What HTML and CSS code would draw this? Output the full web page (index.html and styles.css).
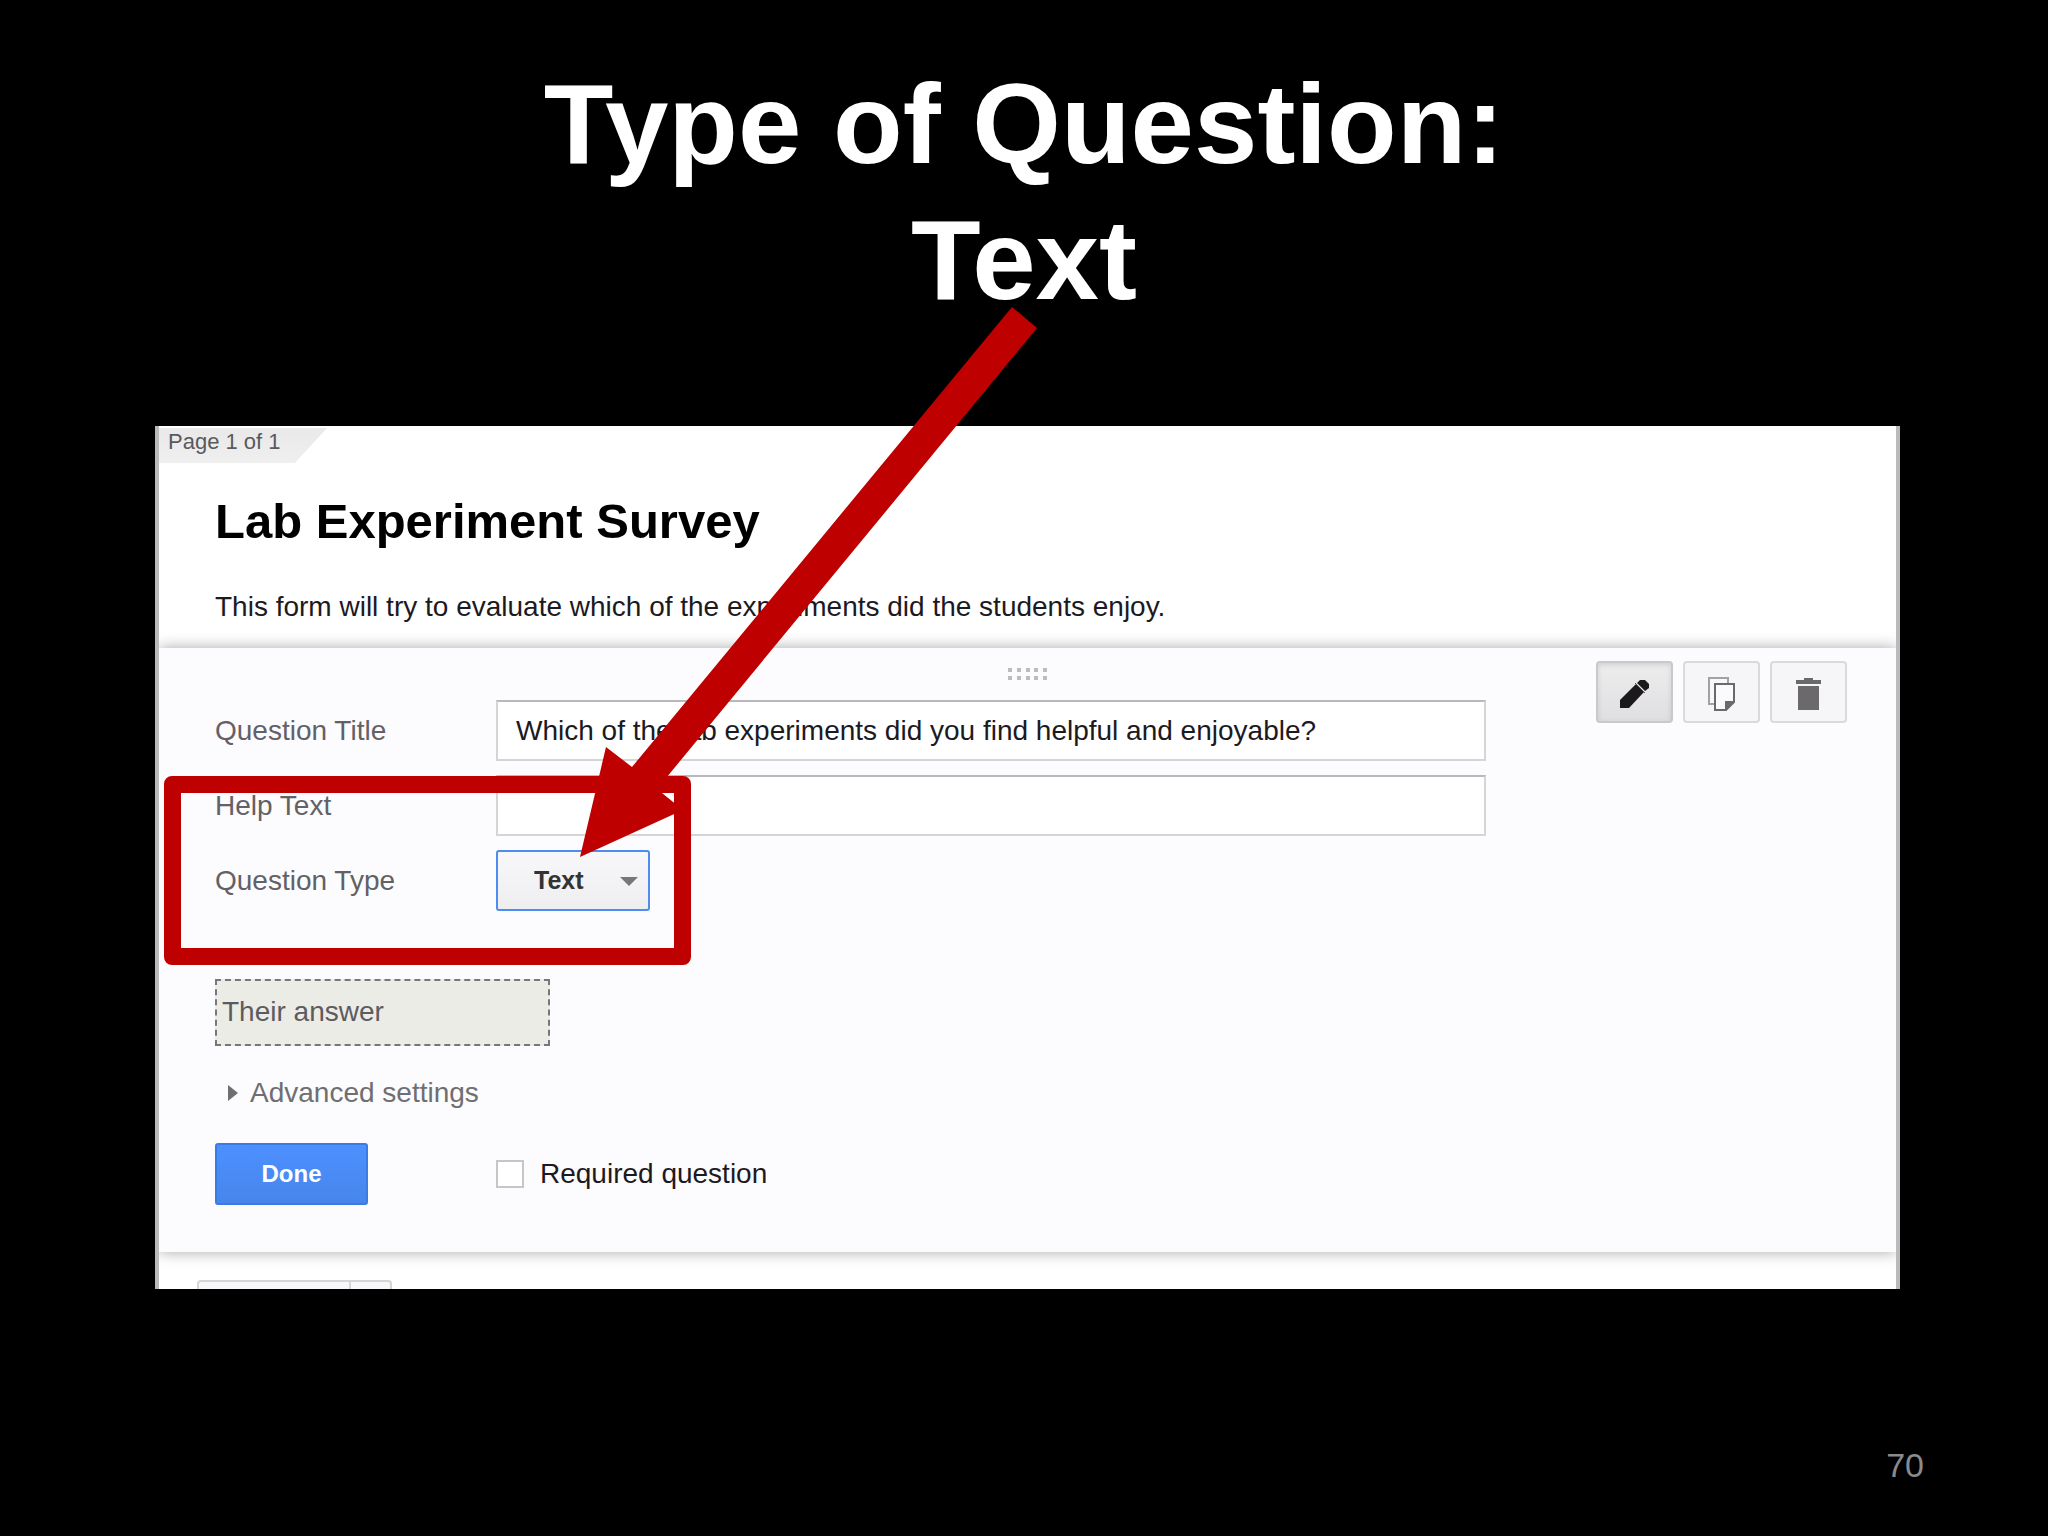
FILE: index.html
```html
<!DOCTYPE html>
<html lang="en">
<head>
    <meta charset="UTF-8">
    <meta name="viewport" content="width=device-width, initial-scale=1.0">
    <title>Type of Question: Text</title>
    <link rel="stylesheet" href="styles.css">
</head>
<body>
    <h1>Type of Question:<br>Text</h1>

    <div class="stage">
        <div class="panel">
            <div class="page-tab">Page 1 of 1</div>
            <div class="form-header">
                <h2>Lab Experiment Survey</h2>
                <p>This form will try to evaluate which of the experiments did the students enjoy.</p>
            </div>

            <div class="card">
                <svg class="drag" width="40" height="12" fill="#bdbcbe">
                    <path d="M0 0h4v4h-4zM9 0h4v4h-4zM18 0h4v4h-4zM26 0h4v4h-4zM35 0h4v4h-4zM0 8h4v4h-4zM9 8h4v4h-4zM18 8h4v4h-4zM26 8h4v4h-4zM35 8h4v4h-4z"/>
                </svg>
                <form class="question">
                    <div class="row">
                        <label for="questionTitle">Question Title</label>
                        <input type="text" id="questionTitle" value="Which of the lab experiments did you find helpful and enjoyable?">
                    </div>
                    <div class="row">
                        <label for="helpText">Help Text</label>
                        <input type="text" id="helpText">
                    </div>
                    <div class="row">
                        <label for="questionType">Question Type</label>
                        <div class="select">
                            <select id="questionType">
                                <option>Text</option>
                            </select>
                        </div>
                    </div>

                    <div class="answer">Their answer</div>
                    <a class="advanced" href="#">Advanced settings</a>

                    <div class="row">
                        <button type="button" class="done">Done</button>
                        <div class="required">
                            <input type="checkbox" id="required">
                            <label for="required">Required question</label>
                        </div>
                    </div>
                </form>

                <div class="toolbar">
                    <button type="button" class="tool active" aria-label="Edit">
                        <svg width="30" height="30" viewBox="0 0 30 30" fill="#1b191c">
                            <path d="M0 21L16 5L24 13L9 29H0zM17 4L20 1H25L29 5V9L25 12z"/>
                            <path d="M15 4L25 14" stroke="#5c5a5e" stroke-width="1"/>
                        </svg>
                    </button>
                    <button type="button" class="tool" aria-label="Duplicate">
                        <svg width="28" height="34" viewBox="0 0 28 34" fill="none">
                            <path d="M1 1H20V27H1z" fill="#f8f7f9" stroke="#a3a1a4" stroke-width="2"/>
                            <path d="M7 7H26V25L18 33H7z" fill="#fbfafc" stroke="#6b696c" stroke-width="2"/>
                            <path d="M17 33V24H27z" fill="#6b696c"/>
                        </svg>
                    </button>
                    <button type="button" class="tool" aria-label="Delete">
                        <svg width="26" height="32" viewBox="0 0 26 32" fill="#6b696c">
                            <path d="M0 2H8V0H17V2H25V6H0zM2 8H23V32H2z"/>
                        </svg>
                    </button>
                </div>
            </div>

            <div class="form-footer">
                <button type="button" class="add" aria-label="Add item"></button>
                <button type="button" class="add-more" aria-label="More items"></button>
            </div>
        </div>

        <!-- callout over the question type -->
        <div class="highlight"></div>
        <svg class="arrow" width="460" height="554" viewBox="0 0 460 554">
            <path d="M432 1L457 22L77 483L103 504L0 551L26 441L52 461z" fill="#bf0000"/>
        </svg>
    </div>

    <div class="page-number">70</div>
</body>
</html>
```

FILE: styles.css
```css
* {
    box-sizing: border-box;
}
body {
    margin: 0;
    padding: 56px 124px 0 155px;
    background: #000;
    font-family: "Liberation Sans", Arial, sans-serif;
    font-size: 28px;
    line-height: 32px;
    color: #1c1a1f;
}
h1 {
    /* keeps the title centred on the slide */
    margin: 0 0 98px -31px;
    font-size: 114px;
    line-height: 136px;
    text-align: center;
    color: #fff;
}
.stage {
    position: relative;
    margin-right: 24px;
}
.panel {
    overflow: hidden;
    padding-top: 2px;
    background: #fff;
    border-left: 4px solid #bab9bc;
    border-right: 4px solid #bab9bc;
}
.page-tab {
    width: 168px;
    height: 35px;
    padding-left: 9px;
    background: linear-gradient(#e9e9e9, #efefef);
    clip-path: polygon(0 0, 100% 0, 136px 100%, 0 100%);
    font-size: 22px;
    line-height: 28px;
    color: #5a595c;
}
.form-header {
    padding: 30px 56px 25px;
}
h2 {
    margin: 0 0 42px;
    font-size: 49px;
    line-height: 56px;
    color: #000;
}
p {
    margin: 0;
}

/* Question editor */
.card {
    position: relative;
    display: flex;
    align-items: flex-start;
    gap: 110px;
    padding: 0 49px 47px 56px;
    background: #fcfbfd;
    box-shadow: 0 0 14px rgba(0, 0, 0, 0.35);
}
.drag {
    position: absolute;
    top: 20px;
    left: 50%;
    margin-left: -20px;
}
.question {
    flex: 1;
    padding-top: 52px;
}
.row {
    display: grid;
    grid-template-columns: 281px 1fr;
    align-items: center;
    margin-bottom: 14px;
}
.row:last-child {
    margin-bottom: 0;
}
.row > label {
    color: #626166;
}
input[type="text"] {
    width: 100%;
    height: 61px;
    padding: 0 18px;
    border: 2px solid #d5d4d7;
    border-top-color: #b9b8bb;
    background: #fff;
    font: inherit;
    color: inherit;
}
.select {
    position: relative;
    width: 154px;
}
.select::after {
    content: "";
    position: absolute;
    top: 27px;
    right: 12px;
    border: 9px solid transparent;
    border-top-color: #77767a;
    border-bottom: 0;
}
select {
    display: block;
    appearance: none;
    width: 100%;
    height: 61px;
    padding: 0 32px 2px 36px;
    border: 2px solid #4d8df0;
    border-radius: 3px;
    background: linear-gradient(#f8f7f9, #eeedef);
    font: bold 25px "Liberation Sans", Arial, sans-serif;
    color: #333;
}
.answer {
    width: 335px;
    height: 67px;
    margin-top: 68px;
    padding-left: 5px;
    border: 2px dashed #77767a;
    background: #ebece5;
    line-height: 62px;
    color: #5c5b5f;
}
.advanced {
    display: flex;
    align-items: center;
    gap: 12px;
    margin: 31px 0 34px 13px;
    color: #6f6e72;
    text-decoration: none;
}
.advanced::before {
    content: "";
    border: 8px solid transparent;
    border-left: 10px solid #6f6e72;
    border-right: 0;
}
.done {
    width: 153px;
    height: 62px;
    border: 2px solid #3a7ce4;
    border-radius: 3px;
    background: linear-gradient(#4d90fe, #4686ec);
    font: bold 24px "Liberation Sans", Arial, sans-serif;
    color: #fff;
}
.required {
    display: flex;
    align-items: center;
    gap: 16px;
}
input[type="checkbox"] {
    appearance: none;
    width: 28px;
    height: 28px;
    margin: 0;
    border: 2px solid #c6c5c8;
    background: #fff;
}

/* Edit, duplicate, delete */
.toolbar {
    display: flex;
    gap: 10px;
    padding-top: 13px;
}
.tool {
    display: flex;
    align-items: center;
    justify-content: center;
    width: 77px;
    height: 62px;
    padding: 4px 0 0;
    border: 2px solid #dad9dc;
    border-radius: 4px;
    background: #f6f5f7;
}
.tool.active {
    border-color: #c9c8cb;
    background: linear-gradient(#ededee, #dfdee0);
    box-shadow: inset 0 2px 5px rgba(0, 0, 0, 0.12);
}
.form-footer {
    display: flex;
    height: 37px;
    padding: 28px 38px 0;
}
.add, .add-more {
    width: 154px;
    height: 61px;
    border: 2px solid #d5d4d7;
    border-radius: 4px 0 0 4px;
    background: #f8f7f9;
}
.add-more {
    width: 41px;
    border-left: 0;
    border-radius: 0 4px 4px 0;
}

/* Callout */
.highlight {
    position: absolute;
    top: 350px;
    left: 9px;
    width: 527px;
    height: 189px;
    border: 17px solid #bf0000;
    border-radius: 8px;
}
.arrow {
    position: absolute;
    top: -120px;
    left: 425px;
}
.page-number {
    margin-top: 156px;
    font-size: 34px;
    line-height: 40px;
    text-align: right;
    color: #8b8a8c;
}
```
